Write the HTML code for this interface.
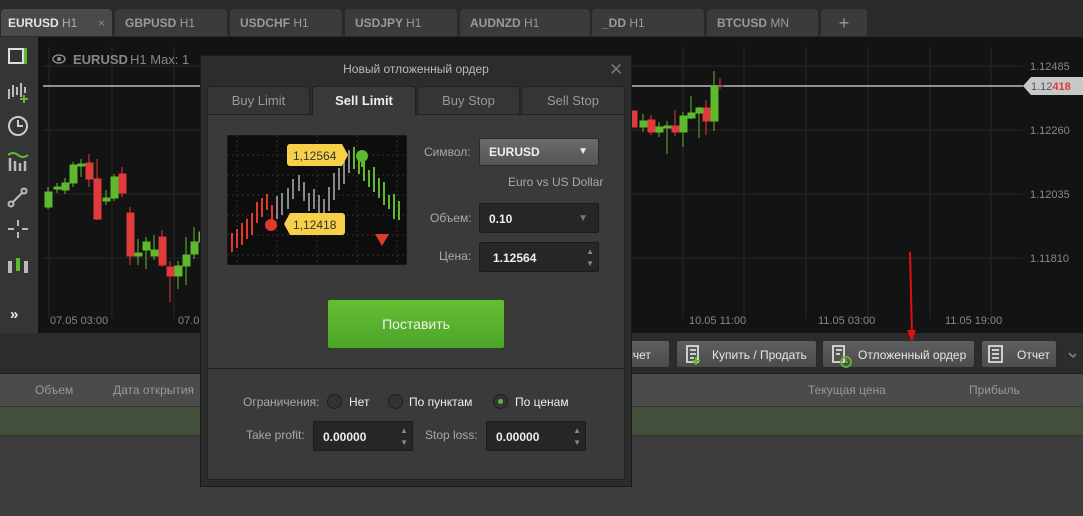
<!DOCTYPE html>
<html><head><meta charset="utf-8"><style>
*{box-sizing:border-box;margin:0;padding:0}
body{width:1083px;height:516px;overflow:hidden;background:#3c3c3c;font-family:"Liberation Sans",sans-serif;position:relative;font-size:12px}
.abs{position:absolute}
.tab{position:absolute;top:8px;height:28px;background:#3b3b3b;border-radius:5px 5px 0 0;color:#9a9a9a;font-size:12px;font-weight:bold;line-height:28px;padding-left:10px;border:1px solid #2a2a2a;border-bottom:none}
.tab span{font-weight:normal}
.btn{position:absolute;top:340px;height:28px;background:linear-gradient(#5e5e5e,#4c4c4c);border-radius:3px;color:#e8e8e8;font-size:12px;line-height:28px;border:1px solid #2a2a2a}
.lbl{position:absolute;color:#a8a8a8;font-size:12px}
.inp{position:absolute;background:#262626;border:1px solid #1c1c1c;border-radius:2px;color:#eee;font-size:12px;font-weight:bold;line-height:30px;padding-left:9px}
.spin{position:absolute;right:4px;top:3px;color:#888;font-size:8px;line-height:12px}
.radio{position:absolute;width:15px;height:15px;border-radius:50%;background:#333;border:1px solid #1e1e1e}
</style></head><body>
<div class="abs" style="left:0;top:0;width:1083px;height:37px;background:#2a2a2a"></div>
<div class="tab" style="left:0;width:113px;background:#4a4a4a;color:#e4e4e4;padding-left:7px">EURUSD <span style="color:#aaa">H1</span><span style="position:absolute;left:97px;color:#888">×</span></div>
<div class="tab" style="left:114px;width:114px">GBPUSD <span>H1</span></div>
<div class="tab" style="left:229px;width:114px">USDCHF <span>H1</span></div>
<div class="tab" style="left:344px;width:114px">USDJPY <span>H1</span></div>
<div class="tab" style="left:459px;width:132px">AUDNZD <span>H1</span></div>
<div class="tab" style="left:591px;width:114px">_DD <span>H1</span></div>
<div class="tab" style="left:706px;width:113px">BTCUSD <span>MN</span></div>
<div class="tab" style="left:820px;width:48px;padding:0;text-align:center;font-size:18px;font-weight:normal">+</div>
<div class="abs" style="left:0;top:37px;width:38px;height:296px;background:#353535"></div>
<svg class="abs" style="left:0;top:37px" width="38" height="296">
<rect x="9" y="12" width="14" height="14" fill="none" stroke="#ddd" stroke-width="2"/><rect x="24" y="11" width="3" height="16" fill="#5fb92d"/>
<g stroke="#bbb" stroke-width="2"><line x1="9" y1="52" x2="9" y2="62"/><line x1="13" y1="48" x2="13" y2="60"/><line x1="17" y1="50" x2="17" y2="58"/><line x1="21" y1="46" x2="21" y2="60"/><line x1="25" y1="50" x2="25" y2="56"/></g>
<g stroke="#5fb92d" stroke-width="2"><line x1="20" y1="62" x2="28" y2="62"/><line x1="24" y1="58" x2="24" y2="66"/></g>
<circle cx="18" cy="89" r="9" fill="none" stroke="#ccc" stroke-width="2"/><path d="M18 83v6h5" fill="none" stroke="#ccc" stroke-width="2"/>
<path d="M8 118q5-4 10 0t10 0" fill="none" stroke="#5fb92d" stroke-width="2"/>
<g stroke="#bbb" stroke-width="2.5"><line x1="10" y1="121" x2="10" y2="134"/><line x1="15" y1="124" x2="15" y2="134"/><line x1="20" y1="126" x2="20" y2="134"/><line x1="25" y1="124" x2="25" y2="134"/></g>
<g fill="none" stroke="#bbb" stroke-width="2"><circle cx="11" cy="167" r="2.5"/><circle cx="24" cy="154" r="2.5"/><line x1="13" y1="165" x2="22" y2="156"/></g>
<g stroke="#bbb" stroke-width="2"><line x1="18" y1="183" x2="18" y2="189"/><line x1="18" y1="195" x2="18" y2="201"/><line x1="8" y1="192" x2="14" y2="192"/><line x1="22" y1="192" x2="28" y2="192"/></g>
<rect x="8" y="224" width="4" height="12" fill="#bbb"/><rect x="16" y="221" width="4" height="13" fill="#5fb92d"/><rect x="24" y="224" width="4" height="12" fill="#bbb"/>
<text x="10" y="282" fill="#eee" font-size="15" font-weight="bold" font-family="Liberation Sans">»</text>
</svg>
<svg class="abs" style="left:38px;top:37px" width="1045" height="296">
<rect width="1045" height="296" fill="#131313"/>
<g stroke="#272727" stroke-width="1">
<line x1="11" y1="10" x2="11" y2="281"/><line x1="74" y1="10" x2="74" y2="281"/><line x1="136" y1="10" x2="136" y2="281"/>
<line x1="645" y1="10" x2="645" y2="281"/><line x1="706" y1="10" x2="706" y2="281"/><line x1="768" y1="10" x2="768" y2="281"/><line x1="830" y1="10" x2="830" y2="281"/><line x1="892" y1="10" x2="892" y2="281"/><line x1="953" y1="10" x2="953" y2="281"/>
<line x1="5" y1="29" x2="985" y2="29"/><line x1="5" y1="93" x2="985" y2="93"/><line x1="5" y1="157" x2="985" y2="157"/><line x1="5" y1="221" x2="985" y2="221"/>
</g>
<line x1="5" y1="49" x2="985" y2="49" stroke="#bbb" stroke-width="1.5"/>
<g font-family="Liberation Sans" font-size="11" fill="#888">
<text x="992" y="33">1.12485</text><text x="992" y="97">1.12260</text><text x="992" y="161">1.12035</text><text x="992" y="225">1.11810</text>
<text x="12" y="287">07.05 03:00</text><text x="140" y="287">07.0</text>
<text x="651" y="287">10.05 11:00</text><text x="780" y="287">11.05 03:00</text><text x="907" y="287">11.05 19:00</text>
</g>
<path d="M985 49l8-9h52v18h-52z" fill="#c8c8c8"/>
<text x="993" y="53" font-family="Liberation Sans" font-size="11" fill="#555">1.12<tspan fill="#e03a3a" font-weight="bold">418</tspan></text>
<text x="35" y="27" font-family="Liberation Sans" font-weight="bold" font-size="13" fill="#888">EURUSD</text>
<text x="92" y="27" font-family="Liberation Sans" font-size="13" fill="#888">H1  Max: 1</text>
<ellipse cx="21" cy="22" rx="6" ry="4" fill="none" stroke="#888" stroke-width="1.5"/><circle cx="21" cy="22" r="2" fill="#888"/>
<g stroke="#5fb92d" fill="#5fb92d"><line x1="10" y1="150" x2="10" y2="172"/><rect x="7" y="155" width="7" height="15"/>
<rect x="16" y="150" width="7" height="2"/><line x1="19" y1="146" x2="19" y2="156"/>
<rect x="24" y="146" width="7" height="7"/><line x1="27" y1="141" x2="27" y2="157"/>
<rect x="32" y="128" width="7" height="18"/><line x1="35" y1="125" x2="35" y2="150"/>
<rect x="40" y="127" width="7" height="2"/><line x1="43" y1="122" x2="43" y2="140"/>
<rect x="65" y="161" width="7" height="3"/><line x1="68" y1="153" x2="68" y2="168"/>
<rect x="73" y="140" width="7" height="21"/><line x1="76" y1="137" x2="76" y2="164"/>
<rect x="97" y="216" width="7" height="3"/><line x1="100" y1="202" x2="100" y2="228"/>
<rect x="105" y="205" width="7" height="8"/><line x1="108" y1="200" x2="108" y2="232"/>
<rect x="113" y="213" width="7" height="6"/><line x1="116" y1="198" x2="116" y2="223"/>
<rect x="137" y="229" width="7" height="10"/><line x1="140" y1="224" x2="140" y2="252"/>
<rect x="145" y="218" width="7" height="11"/><line x1="148" y1="200" x2="148" y2="248"/>
<rect x="153" y="205" width="7" height="12"/><line x1="156" y1="190" x2="156" y2="222"/>
<rect x="161" y="195" width="7" height="10"/><line x1="164" y1="190" x2="164" y2="210"/>
</g>
<g stroke="#e03a3a" fill="#e03a3a"><rect x="48" y="126" width="7" height="16"/><line x1="51" y1="117" x2="51" y2="150"/>
<rect x="56" y="142" width="7" height="40"/><line x1="59" y1="122" x2="59" y2="183"/>
<rect x="81" y="137" width="7" height="19"/><line x1="84" y1="130" x2="84" y2="160"/>
<rect x="89" y="176" width="7" height="43"/><line x1="92" y1="170" x2="92" y2="228"/>
<rect x="121" y="200" width="7" height="28"/><line x1="124" y1="193" x2="124" y2="230"/>
<rect x="129" y="230" width="7" height="9"/><line x1="132" y1="224" x2="132" y2="265"/>
</g>
<g stroke="#e03a3a" fill="#e03a3a"><rect x="594" y="74" width="5" height="16"/><rect x="610" y="83" width="7" height="12"/><line x1="613" y1="78" x2="613" y2="98"/><rect x="634" y="89" width="7" height="6"/><line x1="637" y1="73" x2="637" y2="99"/><rect x="665" y="71" width="7" height="13"/><line x1="668" y1="63" x2="668" y2="98"/><line x1="682" y1="41" x2="682" y2="52"/><line x1="678" y1="49" x2="686" y2="49"/></g>
<g stroke="#5fb92d" fill="#5fb92d"><rect x="602" y="84" width="7" height="6"/><line x1="605" y1="77" x2="605" y2="95"/><rect x="618" y="90" width="7" height="5"/><line x1="621" y1="85" x2="621" y2="100"/><rect x="626" y="89" width="7" height="2"/><line x1="629" y1="84" x2="629" y2="117"/><rect x="642" y="79" width="7" height="16"/><line x1="645" y1="75" x2="645" y2="110"/><rect x="650" y="76" width="7" height="5"/><line x1="653" y1="59" x2="653" y2="82"/><rect x="658" y="71" width="7" height="5"/><line x1="661" y1="70" x2="661" y2="101"/><rect x="673" y="49" width="7" height="35"/><line x1="676" y1="34" x2="676" y2="94"/></g>
</svg>
<div class="abs" style="left:0;top:333px;width:1083px;height:40px;background:#2c2c2c"></div>
<div class="btn" style="left:600px;width:70px;padding-left:26px">счет</div>
<div class="btn" style="left:676px;width:141px;padding-left:35px">Купить / Продать</div>
<div class="btn" style="left:822px;width:153px;padding-left:35px">Отложенный ордер</div>
<div class="btn" style="left:981px;width:76px;padding-left:35px">Отчет</div>
<svg class="abs" style="left:676px;top:340px" width="400" height="28">
<g fill="none" stroke="#ddd" stroke-width="1.8"><path d="M11 6h11v16h-11z"/><path d="M14 10h6M14 14h6M14 18h4"/>
<path d="M157 6h11v16h-11z"/><path d="M160 10h6M160 14h4"/>
<path d="M313 6h13v16h-13z"/><path d="M316 10h7M316 14h7M316 18h7"/></g>
<g stroke="#5fb92d" stroke-width="2"><path d="M20 17v8M16 21h8"/></g>
<circle cx="170" cy="22" r="5" fill="none" stroke="#5fb92d" stroke-width="1.8"/><path d="M170 19v3h2" stroke="#5fb92d" fill="none" stroke-width="1.5"/>
<path d="M393 13l4 4 4-4" fill="none" stroke="#888" stroke-width="1.5"/>
</svg>
<div class="abs" style="left:0;top:373px;width:1083px;height:33px;background:#4b4b4b;border-top:1px solid #222"></div>
<div class="lbl" style="left:35px;top:383px;color:#999">Объем</div>
<div class="lbl" style="left:113px;top:383px;color:#999">Дата открытия</div>
<div class="lbl" style="left:808px;top:383px;color:#999">Текущая цена</div>
<div class="lbl" style="left:969px;top:383px;color:#999">Прибыль</div>
<div class="abs" style="left:0;top:406px;width:1083px;height:30px;background:#434f3a;border-top:1px solid #2f3a28;border-bottom:1px solid #2f3a28"></div>
<svg class="abs" style="left:900px;top:250px" width="20" height="95"><line x1="10" y1="2" x2="12" y2="85" stroke="#e01010" stroke-width="2"/><path d="M7 80l5 12 4-12z" fill="#e01010"/></svg>
<div class="abs" style="left:200px;top:55px;width:432px;height:432px;background:#2c2c2c;border:1px solid #1a1a1a"></div>
<div class="abs" style="left:200px;top:62px;width:432px;text-align:center;color:#bbb;font-size:12px">Новый отложенный ордер</div>
<div class="abs" style="left:609px;top:60px;color:#777;font-size:17px">✕</div>
<div class="abs" style="left:207px;top:114px;width:418px;height:366px;background:#3a3a3a;border:1px solid #222"></div>
<div class="abs" style="left:207px;top:368px;width:418px;height:1px;background:#222"></div>
<div class="abs" style="left:207px;top:86px;width:103px;height:29px;background:#353535;border:1px solid #222;border-radius:4px 4px 0 0;color:#999;text-align:center;line-height:28px;font-size:13px">Buy Limit</div>
<div class="abs" style="left:312px;top:86px;width:104px;height:30px;background:#3a3a3a;border:1px solid #222;border-bottom:none;border-radius:4px 4px 0 0;color:#eee;text-align:center;line-height:28px;font-size:13px;font-weight:bold">Sell Limit</div>
<div class="abs" style="left:417px;top:86px;width:103px;height:29px;background:#353535;border:1px solid #222;border-radius:4px 4px 0 0;color:#999;text-align:center;line-height:28px;font-size:13px">Buy Stop</div>
<div class="abs" style="left:521px;top:86px;width:104px;height:29px;background:#353535;border:1px solid #222;border-radius:4px 4px 0 0;color:#999;text-align:center;line-height:28px;font-size:13px">Sell Stop</div>
<svg class="abs" style="left:227px;top:135px" width="180" height="130">
<rect width="180" height="130" fill="#0d0d0d" stroke="#222"/>
<g stroke="#333" stroke-dasharray="2 3"><line x1="10" y1="0" x2="10" y2="130"/><line x1="50" y1="0" x2="50" y2="130"/><line x1="90" y1="0" x2="90" y2="130"/><line x1="130" y1="0" x2="130" y2="130"/><line x1="170" y1="0" x2="170" y2="130"/><line x1="0" y1="20" x2="180" y2="20"/><line x1="0" y1="40" x2="180" y2="40"/><line x1="0" y1="60" x2="180" y2="60"/><line x1="0" y1="80" x2="180" y2="80"/><line x1="0" y1="100" x2="180" y2="100"/><line x1="0" y1="120" x2="180" y2="120"/></g>
<g stroke="#e03a2a" stroke-width="2"><line x1="5" y1="98" x2="5" y2="117"/><line x1="10" y1="94" x2="10" y2="113"/><line x1="15" y1="88" x2="15" y2="110"/><line x1="20" y1="84" x2="20" y2="104"/><line x1="25" y1="78" x2="25" y2="100"/><line x1="30" y1="67" x2="30" y2="88"/><line x1="35" y1="63" x2="35" y2="82"/><line x1="40" y1="59" x2="40" y2="75"/><line x1="45" y1="70" x2="45" y2="90"/></g>
<g stroke="#888" stroke-width="2"><line x1="50" y1="61" x2="50" y2="84"/><line x1="55" y1="58" x2="55" y2="80"/><line x1="61" y1="53" x2="61" y2="74"/><line x1="66" y1="44" x2="66" y2="64"/><line x1="72" y1="40" x2="72" y2="56"/><line x1="77" y1="47" x2="77" y2="66"/><line x1="82" y1="58" x2="82" y2="76"/><line x1="87" y1="54" x2="87" y2="74"/><line x1="92" y1="60" x2="92" y2="80"/><line x1="97" y1="64" x2="97" y2="90"/><line x1="102" y1="52" x2="102" y2="76"/><line x1="107" y1="38" x2="107" y2="65"/><line x1="112" y1="33" x2="112" y2="55"/><line x1="117" y1="25" x2="117" y2="49"/><line x1="122" y1="15" x2="122" y2="38"/></g>
<g stroke="#5fb92d" stroke-width="2"><line x1="127" y1="12" x2="127" y2="34"/><line x1="132" y1="20" x2="132" y2="39"/><line x1="137" y1="24" x2="137" y2="46"/><line x1="142" y1="35" x2="142" y2="52"/><line x1="147" y1="32" x2="147" y2="57"/><line x1="152" y1="43" x2="152" y2="63"/><line x1="157" y1="47" x2="157" y2="70"/><line x1="162" y1="60" x2="162" y2="74"/><line x1="167" y1="59" x2="167" y2="84"/><line x1="172" y1="66" x2="172" y2="85"/></g>
<line x1="135" y1="22" x2="135" y2="32" stroke="#5fb92d" stroke-width="2"/>
<circle cx="135" cy="21" r="6" fill="#5fb92d"/><circle cx="44" cy="90" r="6" fill="#e03a2a"/>
<path d="M63 9h52l6 11-6 11h-52a3 3 0 0 1-3-3v-16a3 3 0 0 1 3-3z" fill="#f5d048"/>
<path d="M63 78h52a3 3 0 0 1 3 3v16a3 3 0 0 1-3 3h-52l-6-11z" fill="#f5d048"/>
<text x="66" y="25" font-family="Liberation Sans" font-size="12" fill="#333">1,12564</text>
<text x="66" y="94" font-family="Liberation Sans" font-size="12" fill="#333">1,12418</text>
<path d="M148 99h14l-7 12z" fill="#e03a2a"/>
</svg>
<div class="lbl" style="left:424px;top:145px">Символ:</div>
<div class="abs" style="left:479px;top:138px;width:120px;height:28px;background:linear-gradient(#6a6a6a,#555);border:1px solid #2a2a2a;border-radius:2px;color:#eee;font-weight:bold;line-height:26px;padding-left:9px;font-size:12px">EURUSD<span style="position:absolute;right:10px;font-size:10px">▼</span></div>
<div class="lbl" style="left:508px;top:175px">Euro vs US Dollar</div>
<div class="lbl" style="left:430px;top:211px">Объем:</div>
<div class="inp" style="left:479px;top:203px;width:120px;height:30px">0.10<span style="position:absolute;right:10px;color:#777;font-size:10px">▼</span></div>
<div class="lbl" style="left:439px;top:249px">Цена:</div>
<div class="inp" style="left:479px;top:242px;width:120px;height:30px;padding-left:13px">1.12564<span class="spin">▲<br>▼</span></div>
<div class="abs" style="left:327px;top:299px;width:178px;height:50px;background:linear-gradient(#64bf33,#4ea42a);border:1px solid #2a4a1a;border-radius:3px;color:#f0f0f0;text-align:center;line-height:48px;font-size:14px">Поставить</div>
<div class="lbl" style="left:243px;top:395px">Ограничения:</div>
<div class="radio" style="left:327px;top:394px"></div><div class="lbl" style="left:349px;top:395px;color:#eee">Нет</div>
<div class="radio" style="left:388px;top:394px"></div><div class="lbl" style="left:409px;top:395px;color:#eee">По пунктам</div>
<div class="radio" style="left:493px;top:394px"><div style="position:absolute;left:4px;top:4px;width:5px;height:5px;border-radius:50%;background:#5fb92d"></div></div><div class="lbl" style="left:515px;top:395px;color:#eee">По ценам</div>
<div class="lbl" style="left:246px;top:428px">Take profit:</div>
<div class="inp" style="left:313px;top:421px;width:100px;height:30px;padding-left:9px">0.00000<span class="spin">▲<br>▼</span></div>
<div class="lbl" style="left:425px;top:428px">Stop loss:</div>
<div class="inp" style="left:486px;top:421px;width:100px;height:30px;padding-left:9px">0.00000<span class="spin">▲<br>▼</span></div>
</body></html>
